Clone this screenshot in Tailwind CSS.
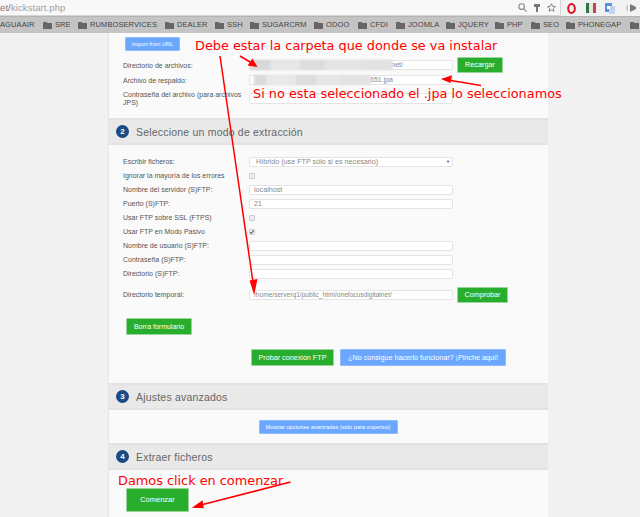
<!DOCTYPE html>
<html lang="es">
<head>
<meta charset="UTF-8">
<title>kickstart.php</title>
<script src="https://cdn.jsdelivr.net/npm/@tailwindcss/browser@4"></script>
</head>
<body class="w-[640px] h-[517px] overflow-hidden relative bg-[#f1f1f1] font-['Liberation_Sans',sans-serif]">
  <svg class="hidden">
    <symbol id="folder" viewBox="0 0 9 8"><path d="M0 1h3.500l1 1H9v6H0z" fill="#666"/></symbol>
  </svg>

  <!-- browser toolbar -->
  <div class="h-[16px] flex bg-[#f2f2f2]">
    <div class="w-[561px] h-[16px] bg-[#f8f8f8] border-r border-b border-[#d4d4d4] rounded-br-[2px] flex items-center justify-between pr-[4px]">
      <span class="text-[9.5px] leading-none text-[#a0a0a0] tracking-[0.1px]"><span class="text-[#777]">et/</span>kickstart.php</span>
      <div class="flex items-center gap-[6px]">
        <svg width="9" height="9" viewBox="0 0 9 9" fill="none" stroke="#888" stroke-width="1.1"><circle cx="3.600" cy="3.600" r="2.800"/><path d="M5.800 5.800L8.600 8.600"/></svg>
        <svg width="8" height="9" viewBox="0 0 8 9" fill="#777"><path d="M1 1h6v3H5v5H3V4H1z"/></svg>
        <svg width="9" height="9" viewBox="0 0 10 10" fill="none" stroke="#777" stroke-width="1"><path d="M5 .8l1.300 2.800 3 .4-2.200 2.100.6 3L5 7.600 2.300 9.100l.6-3L.7 4l3-.4z"/></svg>
      </div>
    </div>
    <div class="flex items-center pl-[6px] gap-[9px]">
      <svg class="mr-[1px]" width="9" height="11" viewBox="0 0 9 11" fill="none" stroke="#e01020" stroke-width="2"><ellipse cx="4.500" cy="5.500" rx="3.300" ry="4.400"/></svg>
      <div class="flex items-center w-[10px] h-[10px]"><div class="h-full flex-1 bg-[#2a7a48]"></div><div class="h-full flex-1 bg-[#e9e4dc]"></div><div class="h-full flex-1 bg-[#c8404a]"></div></div>
      <svg width="10" height="11" viewBox="0 0 10 11"><rect width="7" height="9" fill="#5b8fdc"/><rect x="4" y="3" width="6" height="8" fill="#c6d4ea"/><rect x="2" y="3" width="3" height="3" fill="#fff"/></svg>
      <svg width="14" height="10" viewBox="0 0 14 10" fill="#777"><path d="M6 1l6 3v2L6 9z"/><path d="M3 2.500v5" stroke="#bbb" stroke-width="1.500"/></svg>
    </div>
  </div>

  <!-- bookmarks -->
  <div class="h-[17px] bg-[#c4c4c4] border-t border-[#b4b4b4] flex items-center text-[7.5px] tracking-[0.1px] leading-none text-[#444] whitespace-nowrap overflow-hidden">
    <span class="w-[43px] shrink-0">AGUAAIR</span>
    <svg class="w-[9px] h-[8px] mr-[3px] shrink-0"><use href="#folder"/></svg><span class="w-[23px] shrink-0">SRE</span>
    <svg class="w-[9px] h-[8px] mr-[3px] shrink-0"><use href="#folder"/></svg><span class="w-[75px] shrink-0">RUMBOSERVICES</span>
    <svg class="w-[9px] h-[8px] mr-[3px] shrink-0"><use href="#folder"/></svg><span class="w-[38px] shrink-0">DEALER</span>
    <svg class="w-[9px] h-[8px] mr-[3px] shrink-0"><use href="#folder"/></svg><span class="w-[23px] shrink-0">SSH</span>
    <svg class="w-[9px] h-[8px] mr-[3px] shrink-0"><use href="#folder"/></svg><span class="w-[52px] shrink-0">SUGARCRM</span>
    <svg class="w-[9px] h-[8px] mr-[3px] shrink-0"><use href="#folder"/></svg><span class="w-[32px] shrink-0">ODOO</span>
    <svg class="w-[9px] h-[8px] mr-[3px] shrink-0"><use href="#folder"/></svg><span class="w-[26px] shrink-0">CFDI</span>
    <svg class="w-[9px] h-[8px] mr-[3px] shrink-0"><use href="#folder"/></svg><span class="w-[38px] shrink-0">JOOMLA</span>
    <svg class="w-[9px] h-[8px] mr-[3px] shrink-0"><use href="#folder"/></svg><span class="w-[37px] shrink-0">JQUERY</span>
    <svg class="w-[9px] h-[8px] mr-[3px] shrink-0"><use href="#folder"/></svg><span class="w-[24px] shrink-0">PHP</span>
    <svg class="w-[9px] h-[8px] mr-[3px] shrink-0"><use href="#folder"/></svg><span class="w-[23px] shrink-0">SEO</span>
    <svg class="w-[9px] h-[8px] mr-[3px] shrink-0"><use href="#folder"/></svg><span class="w-[52px] shrink-0">PHONEGAP</span>
    <svg class="w-[9px] h-[8px] shrink-0"><use href="#folder"/></svg>
  </div>

  <!-- page column -->
  <main class="ml-[108px] w-[440px] h-[484px] bg-[#fafafa] border-l border-[#e4e4e4] text-[7px] leading-[8px] text-[#555] overflow-hidden">
    <!-- step 1 -->
    <section class="h-[85px] pl-[14px] pt-[4px]">
      <div class="ml-[2px] w-[55px] h-[14px] bg-[#6ba6ff] border border-[#8fbcff] rounded-[1px] text-white text-[5.6px] flex items-center justify-center">Import from URL</div>
      <div class="mt-[6px] h-[16px] flex items-center">
        <label class="w-[126px] pt-[1px]">Directorio de archivos:</label>
        <div class="w-[204px] h-[10px] bg-white border border-[#e4e4e4] rounded-[2px] text-[#888] flex items-center justify-end pr-[49px]">
          <span>net/</span>
        </div>
        <div class="ml-[4px] w-[46px] h-[16px] bg-[#28ae2c] border border-[#9ad59c] rounded-[1px] text-white text-[7.3px] flex items-center justify-center">Recargar</div>
      </div>
      <div class="h-[14px] flex items-center">
        <label class="w-[126px] pt-[1px]">Archivo de respaldo:</label>
        <div class="w-[204px] h-[10px] bg-white border border-[#e4e4e4] rounded-[2px] text-[#888] flex items-center justify-end pr-[59px]">
          <span>651.jpa</span>
        </div>
      </div>
      <div class="mt-[3px] flex items-center">
        <label class="w-[126px] pt-[1px]">Contraseña del archivo (para archivos JPS)</label>
        <div class="w-[204px] h-[11px] bg-white border border-[#e4e4e4] rounded-[2px]"></div>
      </div>
    </section>

    <!-- step 2 -->
    <header class="h-[27px] bg-[#e9e9e9] border-y-2 border-[#e2e2e2] flex items-center pl-[7px] gap-[7px] text-[#666] text-[10.5px]">
      <span class="w-[13px] h-[13px] rounded-full bg-[#1b4b84] text-white font-bold text-[8px] flex items-center justify-center">2</span>
      <h2 class="tracking-[0.2px]">Seleccione un modo de extracción</h2>
    </header>
    <section class="h-[236px] pl-[14px] pt-[10px]">
      <div class="h-[14px] flex items-center"><label class="w-[126px]">Escribir ficheros:</label>
        <div class="w-[204px] h-[10px] bg-white border border-[#e4e4e4] rounded-[2px] text-[#888] text-[7.2px] flex items-center justify-between pl-[6px] pr-[2px]"><span>Híbrido (use FTP sólo si es necesario)</span><span class="text-[#444] text-[4px]">▼</span></div></div>
      <div class="h-[14px] flex items-center"><label class="w-[126px]">Ignorar la mayoría de los errores</label><div class="w-[6px] h-[6px] bg-[#eee] border border-[#ccc] rounded-[1px]"></div></div>
      <div class="h-[14px] flex items-center"><label class="w-[126px]">Nombre del servidor (S)FTP:</label><div class="w-[204px] h-[10px] bg-white border border-[#e4e4e4] rounded-[2px] text-[#888] text-[7.2px] pl-[4px] flex items-center">localhost</div></div>
      <div class="h-[14px] flex items-center"><label class="w-[126px]">Puerto (S)FTP:</label><div class="w-[204px] h-[10px] bg-white border border-[#e4e4e4] rounded-[2px] text-[#888] text-[7.2px] pl-[4px] flex items-center">21</div></div>
      <div class="h-[14px] flex items-center"><label class="w-[126px]">Usar FTP sobre SSL (FTPS)</label><div class="w-[6px] h-[6px] bg-[#eee] border border-[#ccc] rounded-[1px]"></div></div>
      <div class="h-[14px] flex items-center"><label class="w-[126px]">Usar FTP en Modo Pasivo</label><div class="w-[6px] h-[6px] bg-[#eee] border border-[#ccc] rounded-[1px] flex items-center justify-center"><svg width="4" height="4" viewBox="0 0 4 4" fill="none" stroke="#333" stroke-width="1"><path d="M.4 2l1 1.400L3.600.4"/></svg></div></div>
      <div class="h-[14px] flex items-center"><label class="w-[126px]">Nombre de usuario (S)FTP:</label><div class="w-[204px] h-[10px] bg-white border border-[#e4e4e4] rounded-[2px]"></div></div>
      <div class="h-[14px] flex items-center"><label class="w-[126px]">Contraseña (S)FTP:</label><div class="w-[204px] h-[10px] bg-white border border-[#e4e4e4] rounded-[2px]"></div></div>
      <div class="h-[14px] flex items-center"><label class="w-[126px]">Directorio (S)FTP:</label><div class="w-[204px] h-[10px] bg-white border border-[#e4e4e4] rounded-[2px]"></div></div>
      <div class="mt-[6px] h-[16px] flex items-center"><label class="w-[126px]">Directorio temporal:</label><div class="w-[204px] h-[10px] bg-white border border-[#e4e4e4] rounded-[2px] text-[#888] text-[6.6px] pl-[4px] flex items-center">/home/serverq1/public_html/onefocusdigitalnet/</div>
        <div class="ml-[4px] w-[51px] h-[16px] bg-[#28ae2c] border border-[#9ad59c] rounded-[1px] text-white text-[7.2px] flex items-center justify-center">Comprobar</div></div>
      <div class="mt-[15px] ml-[3px] w-[66px] h-[17px] bg-[#28ae2c] border border-[#9ad59c] rounded-[1px] text-white text-[7px] flex items-center justify-center">Borra formulario</div>
      <div class="mt-[14px] ml-[128px] flex gap-[6px] text-white text-[7.2px] whitespace-nowrap">
        <div class="w-[83px] h-[17px] bg-[#28ae2c] border border-[#9ad59c] rounded-[1px] flex items-center justify-center">Probar conexión FTP</div>
        <div class="w-[166px] h-[17px] bg-[#6ba6ff] border border-[#8fbcff] rounded-[1px] flex items-center justify-center">¿No consigue hacerlo funcionar? ¡Pinche aquí!</div>
      </div>
    </section>

    <!-- step 3 -->
    <header class="mt-[2px] h-[27px] bg-[#e9e9e9] border-y-2 border-[#e2e2e2] flex items-center pl-[7px] gap-[7px] text-[#666] text-[10.5px]">
      <span class="w-[13px] h-[13px] rounded-full bg-[#1b4b84] text-white font-bold text-[8px] flex items-center justify-center">3</span>
      <h2 class="tracking-[0.2px]">Ajustes avanzados</h2>
    </header>
    <section class="h-[33px] flex justify-center items-center pr-[1px]">
      <div class="w-[139px] h-[14px] bg-[#6ba6ff] border border-[#8fbcff] rounded-[1px] text-white text-[5.7px] flex items-center justify-center">Mostrar opciones avanzadas (sólo para expertos)</div>
    </section>

    <!-- step 4 -->
    <header class="h-[27px] bg-[#e9e9e9] border-y-2 border-[#e2e2e2] flex items-center pl-[7px] gap-[7px] text-[#666] text-[10.5px]">
      <span class="w-[13px] h-[13px] rounded-full bg-[#1b4b84] text-white font-bold text-[8px] flex items-center justify-center">4</span>
      <h2 class="tracking-[0.2px]">Extraer ficheros</h2>
    </header>
    <section class="pl-[17px] pt-[18px]">
      <div class="w-[63px] h-[24px] bg-[#28ae2c] border border-[#9ad59c] rounded-[1px] text-white text-[7.5px] flex items-center justify-center">Comenzar</div>
    </section>
  </main>

  <!-- redacted paths -->
  <div class="absolute left-[250px] top-[60px] w-[143px] h-[10px] blur-[1px] bg-[#e2e2e2] flex">
    <div class="w-[20px] bg-[#d8d8d8]"></div><div class="w-[30px] bg-[#e6e6e6]"></div><div class="w-[25px] bg-[#dcdcdc]"></div><div class="w-[40px] bg-[#e4e4e4]"></div>
  </div>
  <div class="absolute left-[254px] top-[75px] w-[117px] h-[10px] blur-[1px] bg-[#e2e2e2] flex">
    <div class="w-[12px] bg-[#dadada]"></div><div class="w-[30px] bg-[#e8e8e8]"></div><div class="w-[20px] bg-[#dcdcdc]"></div><div class="w-[24px] bg-[#e6e6e6]"></div>
  </div>

  <!-- red annotations -->
  <div class="absolute inset-0 font-['DejaVu_Sans',sans-serif] text-[#ff0000] whitespace-nowrap leading-none">
    <span class="absolute left-[195px] top-[40px] text-[12.85px]">Debe estar la carpeta que donde se va instalar</span>
    <span class="absolute left-[253px] top-[88px] text-[12.85px]">Si no esta seleccionado el .jpa lo seleccionamos</span>
    <span class="absolute left-[118px] top-[475px] text-[12.85px]">Damos click en comenzar</span>
    <svg class="absolute inset-0" width="640" height="517" viewBox="0 0 640 517" fill="none" stroke="#f00" stroke-width="1.5">
      <path d="M220 56L254 289"/><path d="M250.500 281l3.500 11 2.500-12z" fill="#f00"/>
      <path d="M240 56L255 65"/><path d="M249 65l7 1-3.500-6z" fill="#f00"/>
      <path d="M481 85.500L445 79.500"/><path d="M451 76.500l-8 2.500 7 3z" fill="#f00"/>
      <path d="M290.500 482L197 506"/><path d="M202 501.500l-8 5.500 9 .5z" fill="#f00"/>
    </svg>
  </div>
</body>
</html>
